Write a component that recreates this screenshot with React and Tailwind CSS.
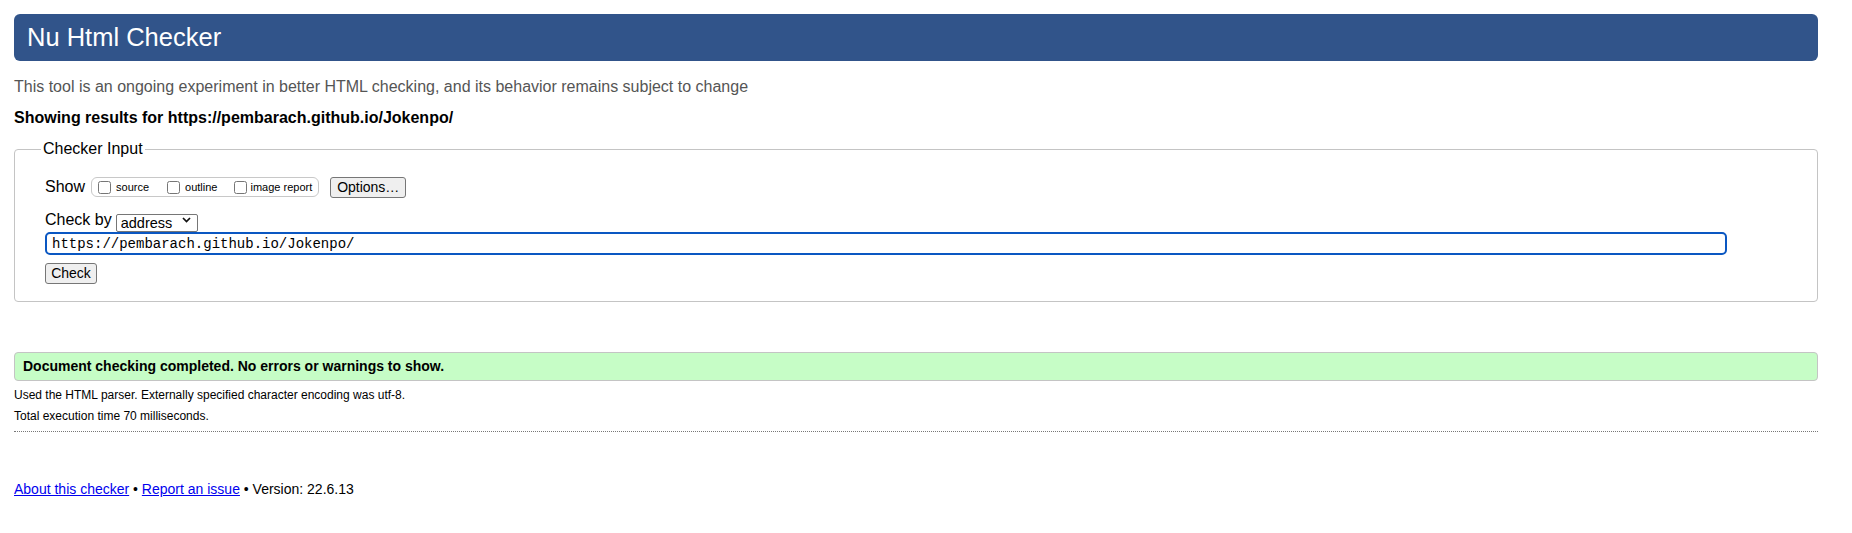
import React from "react";

export default function App() {
  return (
    <div className="min-h-[533px] bg-white pl-[14px] pr-[34px] pt-[14px] font-['Liberation_Sans',Arial,sans-serif] text-black">
      <h1 className="h-[47px] rounded-[6px] bg-[#31548a] pl-[13px] text-[25.5px] leading-[47px] font-normal text-white">
        Nu Html Checker
      </h1>
      <p className="mt-[16px] text-[16px] leading-[20px] text-[#555]">
        This tool is an ongoing experiment in better HTML checking, and its behavior remains subject to change
      </p>
      <p className="mt-[11px] text-[16px] leading-[20px] font-bold">
        Showing results for https://pembarach.github.io/Jokenpo/
      </p>

      <fieldset className="mt-[11px] rounded-[4px] border border-[#c4c4c4] pl-[30px] pr-[90px] pb-[17px]">
        <legend className="-ml-[4px] px-[2px] text-[16px] leading-[20px]">Checker Input</legend>

        <div className="mt-[18px] flex h-[20px] items-center">
          <span className="text-[16px] leading-[20px]">Show</span>
          <div className="ml-[6px] flex h-[20px] items-center rounded-[6px] border border-[#c8c8c8] pl-[6px] pr-[6px]">
            <label className="flex items-center">
              <input type="checkbox" className="m-0 h-[13px] w-[13px]" />
              <span className="ml-[5px] text-[11px] leading-[14px]">source</span>
            </label>
            <label className="ml-[18px] flex items-center">
              <input type="checkbox" className="m-0 h-[13px] w-[13px]" />
              <span className="ml-[5px] text-[11px] leading-[14px]">outline</span>
            </label>
            <label className="ml-[17px] flex items-center">
              <input type="checkbox" className="m-0 h-[13px] w-[13px]" />
              <span className="ml-[3px] text-[11px] leading-[14px]">image report</span>
            </label>
          </div>
          <button className="ml-[11px] h-[21px] w-[76px] rounded-[3px] border border-[#767676] bg-[#efefef] text-[14px] leading-[19px]">
            Options…
          </button>
        </div>

        <div className="mt-[14px] flex h-[18px] items-center">
          <span className="text-[16px] leading-[20px]">Check by</span>
          <div className="relative ml-[4px] h-[18px] w-[82px]">
            <select className="h-[18px] w-[82px] appearance-none rounded-[2px] border border-[#767676] bg-white pl-[4px] text-[14.5px] leading-[16px]">
              <option>address</option>
            </select>
            <svg
              className="pointer-events-none absolute right-[7px] top-[6px]"
              width="9"
              height="6"
              viewBox="0 0 9 6"
            >
              <path d="M1 1 L4.5 4.6 L8 1" fill="none" stroke="#111" strokeWidth="1.7" />
            </svg>
          </div>
        </div>

        <input
          type="text"
          readOnly
          value="https://pembarach.github.io/Jokenpo/"
          className="mt-[3px] block h-[23px] w-full rounded-[5px] border-2 border-[#0a57c2] px-[5px] font-['Liberation_Mono','DejaVu_Sans_Mono',monospace] text-[14px] leading-[19px] outline-none"
        />

        <button className="mt-[8px] block h-[21px] w-[52px] rounded-[3px] border border-[#767676] bg-[#efefef] text-[14px] leading-[19px]">
          Check
        </button>
      </fieldset>

      <div className="mt-[50px] h-[29px] rounded-[4px] border border-[#c4c4c4] bg-[#c6fdc6] pl-[8px] text-[14px] font-bold leading-[27px]">
        Document checking completed. No errors or warnings to show.
      </div>
      <p className="mt-[6px] text-[12px] leading-[16px]">
        Used the HTML parser. Externally specified character encoding was utf-8.
      </p>
      <p className="mt-[5px] text-[12px] leading-[16px]">Total execution time 70 milliseconds.</p>
      <div className="mt-[7px] border-t border-dotted border-[#777]" />

      <p className="mt-[48px] text-[14px] leading-[18px]">
        <a href="#" className="text-[#0000ee] underline">
          About this checker
        </a>
        {" • "}
        <a href="#" className="text-[#0000ee] underline">
          Report an issue
        </a>
        {" • Version: 22.6.13"}
      </p>
    </div>
  );
}
